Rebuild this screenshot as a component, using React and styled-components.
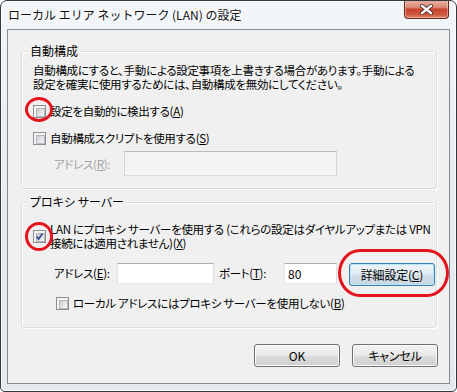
import React from "react";
import styled, { createGlobalStyle } from "styled-components";

const Global = createGlobalStyle`
  html, body { margin: 0; padding: 0; background: #ffffff; }
  body {
    font-family: "Noto Sans CJK JP", "Noto Sans", sans-serif;
    font-size: 12px;
    color: #000;
  }
  * { box-sizing: border-box; }
`;

const Window = styled.div`
  width: 457px;
  height: 392px;
  border: 1px solid #34383d;
  border-radius: 7px 7px 5px 5px;
  background: linear-gradient(180deg, #f3f6f9 0%, #e8edf2 40%, #e4e9ee 100%);
  box-shadow: inset 0 0 0 1px rgba(255, 255, 255, 0.85);
  display: flex;
  flex-direction: column;
  overflow: hidden;
`;

const TitleBar = styled.div`
  height: 28px;
  flex: none;
  display: flex;
  justify-content: space-between;
  align-items: flex-start;
  padding-left: 7px;
  padding-right: 7px;
`;

const Title = styled.div`
  padding-top: 6px;
  line-height: 16px;
  font-size: 12px;
  color: #111;
  white-space: nowrap;
  text-shadow: 0 0 6px #fff, 0 0 3px #fff;
`;

const CloseButton = styled.div`
  width: 45px;
  height: 19px;
  margin-top: -1px;
  border: 1px solid #6b2a20;
  border-top: none;
  border-radius: 0 0 4px 4px;
  background: linear-gradient(
    180deg,
    #eab3a8 0%,
    #dc8b78 40%,
    #c8432c 52%,
    #cf573e 80%,
    #e2876c 100%
  );
  box-shadow: inset 0 0 0 1px rgba(255, 255, 255, 0.35);
  display: flex;
  align-items: center;
  justify-content: center;
`;

const Client = styled.div`
  flex: 1;
  margin: 0 6px 7px 6px;
  border: 1px solid #868b91;
  background: #f0f0f0;
  padding: 13px 12px 0 13px;
  display: flex;
  flex-direction: column;
  font-size: 11.5px;
  letter-spacing: -0.3px;
  font-feature-settings: "palt";
`;

const Group = styled.fieldset`
  margin: ${(p) => p.$top || 0}px 0 0 0;
  min-width: 0;
  border: 1px solid #d5dfe5;
  border-radius: 3px;
  box-shadow: inset 1px 1px 0 #fff, 1px 1px 0 #fff;
  padding: 0 11px ${(p) => p.$bottom}px 11px;
  display: flex;
  flex-direction: column;
`;

const Legend = styled.legend`
  margin-left: -5px;
  padding: 0 2px;
  line-height: 16px;
  font-size: 12px;
  letter-spacing: 0;
  background: #f0f0f0;
`;

const Text = styled.div`
  line-height: 14px;
  white-space: nowrap;
  margin-top: ${(p) => p.$top || 0}px;
`;

const CheckRow = styled.div`
  display: flex;
  align-items: center;
  gap: 4px;
  margin-top: ${(p) => p.$top || 0}px;
  margin-left: ${(p) => p.$indent || 0}px;
  line-height: ${(p) => p.$lh || 16}px;
  white-space: nowrap;
`;

const LabelLines = styled.span`
  display: flex;
  flex-direction: column;
  line-height: 14px;
`;

const Anchor = styled.span`
  position: relative;
  display: inline-flex;
  flex: none;
`;

const Box = styled.span`
  position: relative;
  width: 13px;
  height: 13px;
  border: 1px solid #8e8f8f;
  background: #f4f4f4;
  &::before {
    content: "";
    position: absolute;
    left: 2px;
    top: 2px;
    width: 7px;
    height: 7px;
    border: 1px solid #b4b8bd;
    background: linear-gradient(135deg, #c9cdd3 0%, #e3e6e9 55%, #f7f7f7 100%);
  }
  svg {
    position: absolute;
    left: 0;
    top: 0;
  }
`;

const Mark = styled.span`
  position: absolute;
  left: ${(p) => p.$x}px;
  top: ${(p) => p.$y}px;
  width: ${(p) => p.$w}px;
  height: ${(p) => p.$h}px;
  border: 3px solid #e3141c;
  border-radius: ${(p) => p.$r || "50%"};
  pointer-events: none;
`;

const FieldRow = styled.div`
  display: flex;
  align-items: ${(p) => p.$align || "center"};
  margin-top: ${(p) => p.$top || 0}px;
  margin-left: ${(p) => p.$indent || 0}px;
  white-space: nowrap;
`;

const FieldLabel = styled.span`
  width: ${(p) => p.$w}px;
  flex: none;
  margin-left: ${(p) => p.$gap || 0}px;
  line-height: ${(p) => p.$lh || 16}px;
  color: ${(p) => (p.$disabled ? "#a2a2a2" : "#000")};
`;

const Input = styled.input`
  width: ${(p) => p.$w}px;
  height: ${(p) => p.$h}px;
  flex: none;
  margin: 0;
  padding: 0 3px;
  font: inherit;
  font-size: 12px;
  letter-spacing: 0;
  color: #000;
  outline: none;
  border: 1px solid;
  border-color: ${(p) =>
    p.disabled ? "#b6babe #d2d5d8 #d9dde0 #d2d5d8" : "#abadb3 #dbdfe6 #e3e9ef #e2e3ea"};
  background: ${(p) => (p.disabled ? "#f4f4f4" : "#ffffff")};
`;

const Button = styled.button`
  width: 86px;
  height: 23px;
  flex: none;
  margin: 0;
  padding: 0;
  font: inherit;
  font-size: 12px;
  letter-spacing: -0.2px;
  color: #000;
  border-radius: 3px;
  border: 1px solid ${(p) => (p.$hot ? "#3c7fb1" : "#707070")};
  background: ${(p) =>
    p.$hot
      ? "linear-gradient(180deg, #edf4f9 0%, #e3ecf3 48%, #d3dfe9 52%, #c8d6e2 100%)"
      : "linear-gradient(180deg, #f2f2f2 0%, #ebebeb 48%, #dddddd 52%, #cfcfcf 100%)"};
  box-shadow: inset 0 0 0 1px ${(p) => (p.$hot ? "#b9e6fb" : "#fbfbfb")};
  display: flex;
  align-items: center;
  justify-content: center;
`;

const ButtonAnchor = styled(Anchor)`
  margin-left: 12px;
`;

const ButtonRow = styled.div`
  display: flex;
  justify-content: flex-end;
  gap: 12px;
  margin-top: 16px;
  margin-right: -1px;
`;

const CloseX = () => (
  <svg width="13" height="11" viewBox="0 0 13 11">
    <path d="M2 1.8 L11 9.2 M11 1.8 L2 9.2" stroke="#5b3a35" strokeWidth="4.2" strokeLinecap="round" />
    <path d="M2 1.8 L11 9.2 M11 1.8 L2 9.2" stroke="#ffffff" strokeWidth="2.3" strokeLinecap="round" />
  </svg>
);

const Check = ({ checked }) => (
  <Box>
    {checked && (
      <svg width="11" height="11" viewBox="0 0 11 11">
        <path d="M2.6 5.6 L4.6 8 L8.6 2.4" fill="none" stroke="#3a4f92" strokeWidth="1.8" />
      </svg>
    )}
  </Box>
);

export default function App() {
  return (
    <>
      <Global />
      <Window>
        <TitleBar>
          <Title>ローカル エリア ネットワーク (LAN) の設定</Title>
          <CloseButton>
            <CloseX />
          </CloseButton>
        </TitleBar>
        <Client>
          <Group $bottom={12}>
            <Legend>自動構成</Legend>
            <Text $top={4}>
              自動構成にすると、手動による設定事項を上書きする場合があります。手動による
              <br />
              設定を確実に使用するためには、自動構成を無効にしてください。
            </Text>
            <CheckRow $top={12}>
              <Anchor>
                <Check />
                <Mark $x={-8} $y={-8} $w={28} $h={25} />
              </Anchor>
              <span>
                設定を自動的に検出する(<u>A</u>)
              </span>
            </CheckRow>
            <CheckRow $top={11}>
              <Check />
              <span>
                自動構成スクリプトを使用する(<u>S</u>)
              </span>
            </CheckRow>
            <FieldRow $top={5} $indent={21}>
              <FieldLabel $w={70} $disabled>
                アドレス(<u>R</u>):
              </FieldLabel>
              <Input $w={213} $h={25} disabled />
            </FieldRow>
          </Group>

          <Group $top={5} $bottom={16}>
            <Legend>プロキシ サーバー</Legend>
            <CheckRow $top={12}>
              <Anchor>
                <Check checked />
                <Mark $x={-8} $y={-8} $w={28} $h={29} />
              </Anchor>
              <LabelLines>
                <span>LAN にプロキシ サーバーを使用する (これらの設定はダイヤルアップまたは VPN</span>
                <span>
                  接続には適用されません)(<u>X</u>)
                </span>
              </LabelLines>
            </CheckRow>
            <FieldRow $top={13} $indent={21} $align="flex-start">
              <FieldLabel $w={63} $lh={21}>
                アドレス(<u>E</u>):
              </FieldLabel>
              <Input $w={97} $h={21} />
              <FieldLabel $w={65} $lh={21} $gap={5}>
                ポート(<u>T</u>):
              </FieldLabel>
              <Input $w={53} $h={21} defaultValue="80" />
              <ButtonAnchor>
                <Button $hot>
                  詳細設定(<u>C</u>)
                </Button>
                <Mark $x={-11} $y={-14} $w={111} $h={48} $r="22px / 24px" />
              </ButtonAnchor>
            </FieldRow>
            <CheckRow $top={9} $indent={23}>
              <Check />
              <span>
                ローカル アドレスにはプロキシ サーバーを使用しない(<u>B</u>)
              </span>
            </CheckRow>
          </Group>

          <ButtonRow>
            <Button>OK</Button>
            <Button>キャンセル</Button>
          </ButtonRow>
        </Client>
      </Window>
    </>
  );
}
